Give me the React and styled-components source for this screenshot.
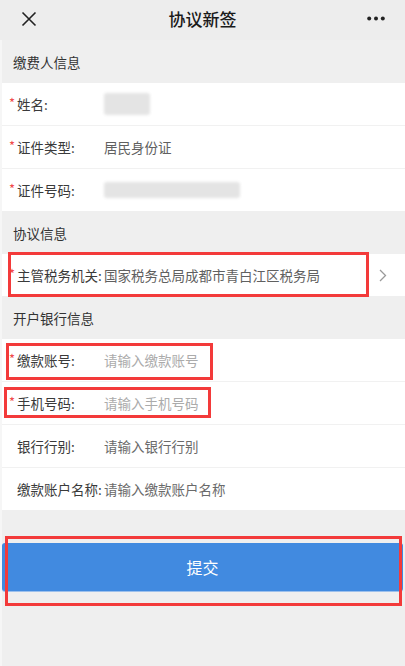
import React from "react";
import styled, { createGlobalStyle } from "styled-components";

const Global = createGlobalStyle`
  html, body { margin: 0; padding: 0; background: #f6f6f6; }
  body { font-family: "Noto Sans CJK SC", "Noto Sans", sans-serif; }
  * { box-sizing: border-box; }
`;

const Page = styled.div`
  width: 405px;
  min-height: 666px;
  background: #f6f6f6;
  display: flex;
  flex-direction: column;
`;

const NavBar = styled.div`
  height: 40px;
  background: #ededed;
  display: grid;
  grid-template-columns: 60px 1fr 60px;
  align-items: center;
`;

const NavTitle = styled.div`
  text-align: center;
  font-size: 17px;
  font-weight: 500;
  color: #1a1a1a;
  padding-bottom: 3px;
`;

const NavIcon = styled.div`
  display: flex;
  align-items: center;
  justify-content: ${(p) => p.$align};
  padding: ${(p) => (p.$align === "flex-start" ? "0 0 3px 21px" : "0 20px 3px 0")};
`;

const Body = styled.div`
  margin-left: 2px;
  background: #efefef;
  flex: 1;
  display: flex;
  flex-direction: column;
  padding-bottom: 75px;
`;

const SectionTitle = styled.div`
  height: 43px;
  display: flex;
  align-items: center;
  padding-left: 11px;
  font-size: 13.5px;
  color: #333;
`;

const Group = styled.div`
  background: #fff;
  display: flex;
  flex-direction: column;
`;

const Row = styled.div`
  position: relative;
  height: ${(p) => (p.$first ? "42px" : "43px")};
  display: flex;
  align-items: center;
  padding-left: 15px;
  border-top: ${(p) => (p.$first ? "none" : "1px solid #f1f1f1")};
`;

const Star = styled.span`
  width: 8px;
  margin-left: -8px;
  color: #f04a4a;
  font-size: 13px;
  margin-top: -4px;
`;

const Label = styled.span`
  min-width: 87px;
  padding-right: 2px;
  white-space: nowrap;
  font-size: 13.5px;
  color: #3a3a3a;
`;

const Value = styled.span`
  font-size: 13.5px;
  color: ${(p) => p.$tone};
  white-space: nowrap;
`;

const Blur = styled.div`
  width: ${(p) => p.$w}px;
  height: ${(p) => p.$h}px;
  background: #e4e4e4;
  border-radius: 3px;
  filter: blur(1.5px);
`;

const Chevron = styled.div`
  margin-left: auto;
  margin-right: 18px;
  display: flex;
  align-items: center;
`;

const Mark = styled.div`
  position: absolute;
  top: ${(p) => p.$t}px;
  left: ${(p) => p.$l}px;
  width: ${(p) => p.$w}px;
  height: ${(p) => p.$h}px;
  border: 3px solid #f33a3a;
  pointer-events: none;
`;

const ButtonWrap = styled.div`
  position: relative;
  margin-top: 33px;
  margin-right: 2px;
`;

const SubmitButton = styled.button`
  width: 100%;
  height: 48px;
  border: none;
  border-radius: 3px;
  background: #418ae0;
  box-shadow: 0 1px 0 #9cc0ec;
  color: #fff;
  font-family: inherit;
  font-size: 16px;
  padding-bottom: 2px;
`;

const Field = ({ required, label, children, first, mark }) => (
  <Row $first={first}>
    {required ? <Star>*</Star> : null}
    <Label>{label}</Label>
    {children}
    {mark ? <Mark $t={mark[0]} $l={mark[1]} $w={mark[2]} $h={mark[3]} /> : null}
  </Row>
);

export default function App() {
  return (
    <>
      <Global />
      <Page>
        <NavBar>
          <NavIcon $align="flex-start">
            <svg width="16" height="16" viewBox="0 0 16 16">
              <path d="M1.5 1.5 L14.5 14.5 M14.5 1.5 L1.5 14.5" stroke="#222" strokeWidth="1.6" fill="none" />
            </svg>
          </NavIcon>
          <NavTitle>协议新签</NavTitle>
          <NavIcon $align="flex-end">
            <svg width="18" height="5" viewBox="0 0 18 5">
              <circle cx="2.2" cy="2.5" r="2" fill="#222" />
              <circle cx="9" cy="2.5" r="2" fill="#222" />
              <circle cx="15.8" cy="2.5" r="2" fill="#222" />
            </svg>
          </NavIcon>
        </NavBar>
        <Body>
          <SectionTitle>缴费人信息</SectionTitle>
          <Group>
            <Field required first label="姓名:">
              <Blur $w={46} $h={22} />
            </Field>
            <Field required label="证件类型:">
              <Value $tone="#606060">居民身份证</Value>
            </Field>
            <Field required label="证件号码:">
              <Blur $w={136} $h={16} />
            </Field>
          </Group>
          <SectionTitle>协议信息</SectionTitle>
          <Group>
            <Field required first label="主管税务机关:" mark={[-2, 6, 361, 45]}>
              <Value $tone="#606060">国家税务总局成都市青白江区税务局</Value>
              <Chevron>
                <svg width="8" height="13" viewBox="0 0 8 13">
                  <path d="M1 1 L6.5 6.5 L1 12" stroke="#9a9a9a" strokeWidth="1.3" fill="none" />
                </svg>
              </Chevron>
            </Field>
          </Group>
          <SectionTitle>开户银行信息</SectionTitle>
          <Group>
            <Field required first label="缴款账号:" mark={[4, 4, 207, 37]}>
              <Value $tone="#ababab">请输入缴款账号</Value>
            </Field>
            <Field required label="手机号码:" mark={[5, 2, 207, 31]}>
              <Value $tone="#ababab">请输入手机号码</Value>
            </Field>
            <Field label="银行行别:">
              <Value $tone="#6a6a6a">请输入银行行别</Value>
            </Field>
            <Field label="缴款账户名称:">
              <Value $tone="#6a6a6a">请输入缴款账户名称</Value>
            </Field>
          </Group>
          <ButtonWrap>
            <SubmitButton>提交</SubmitButton>
            <Mark $t={-7} $l={3} $w={397} $h={70} />
          </ButtonWrap>
        </Body>
      </Page>
    </>
  );
}
